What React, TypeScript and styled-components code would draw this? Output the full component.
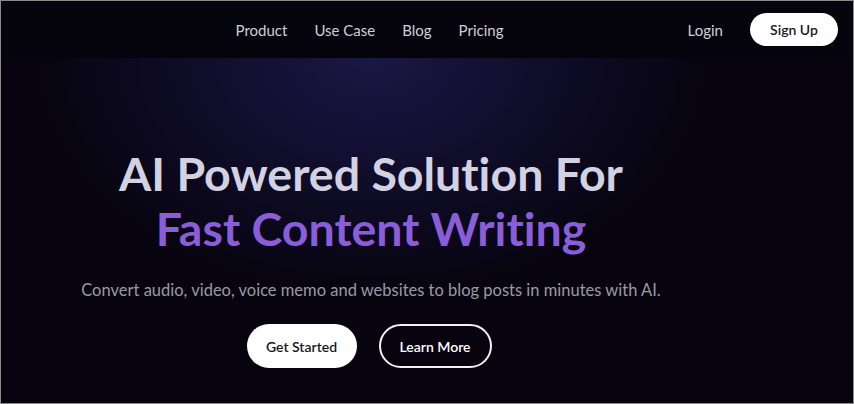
import React from "react";
import styled, { createGlobalStyle } from "styled-components";

const Global = createGlobalStyle`
  html, body { margin: 0; padding: 0; background: #07040f; }
  * { box-sizing: border-box; }
  body { font-family: Lato, "Open Sans", sans-serif; font-variant-ligatures: none; }
`;

const Frame = styled.div`
  width: 854px;
  height: 404px;
  border: 1px solid #8a8a8a;
  background: #07040f;
  display: flex;
  flex-direction: column;
  overflow: hidden;
`;

const Nav = styled.nav`
  height: 57px;
  flex: none;
  background: #05030c;
  display: grid;
  grid-template-columns: 1fr auto 1fr;
  align-items: center;
  padding: 0 15px 0 0;
`;

const NavLinks = styled.div`
  grid-column: 2;
  display: flex;
  gap: 27px;
  margin-left: -100px;
`;

const NavLink = styled.a`
  font-size: 15px;
  color: #cfcfd4;
  text-decoration: none;
`;

const NavRight = styled.div`
  grid-column: 3;
  justify-self: end;
  display: flex;
  align-items: center;
  gap: 27px;
`;

const PillButton = styled.button<{ $variant?: "solid" | "outline"; $w: number; $h: number }>`
  width: ${(p) => p.$w}px;
  height: ${(p) => p.$h}px;
  border-radius: 999px;
  font-family: Lato, sans-serif;
  font-variant-ligatures: none;
  font-size: 14px;
  font-weight: 600;
  cursor: pointer;
  background: ${(p) => (p.$variant === "outline" ? "transparent" : "#ffffff")};
  color: ${(p) => (p.$variant === "outline" ? "#ffffff" : "#17151f")};
  border: ${(p) => (p.$variant === "outline" ? "2px solid #f2f2f2" : "none")};
  padding: 0;
`;

const Hero = styled.section`
  flex: 1;
  background:
    radial-gradient(ellipse 340px 240px at 370px 0px, #1a1845 0%, #141136 30%, #0d0a22 65%, rgba(7,4,15,0) 100%),
    #07040f;
  display: flex;
  flex-direction: column;
  align-items: center;
  padding: 88px 112px 0 0;
`;

const Title = styled.h1`
  margin: 0;
  font-size: 46.5px;
  font-weight: 700;
  line-height: 55px;
  text-align: center;
`;

const TitleLine = styled.span<{ $accent?: boolean }>`
  display: block;
  color: ${(p) => (p.$accent ? "#8b5ed9" : "#d3d2e2")};
`;

const Subtitle = styled.p`
  margin: 24px 0 0;
  font-size: 16.5px;
  color: #9a9aa4;
  text-align: center;
`;

const Actions = styled.div`
  display: flex;
  gap: 22px;
  margin-top: 24px;
  margin-right: 4px;
`;

export default function App() {
  return (
    <>
      <Global />
      <Frame>
        <Nav>
          <NavLinks>
            <NavLink>Product</NavLink>
            <NavLink>Use Case</NavLink>
            <NavLink>Blog</NavLink>
            <NavLink>Pricing</NavLink>
          </NavLinks>
          <NavRight>
            <NavLink>Login</NavLink>
            <PillButton $w={88} $h={33}>Sign Up</PillButton>
          </NavRight>
        </Nav>
        <Hero>
          <Title>
            <TitleLine>AI Powered Solution For</TitleLine>
            <TitleLine $accent>Fast Content Writing</TitleLine>
          </Title>
          <Subtitle>Convert audio, video, voice memo and websites to blog posts in minutes with AI.</Subtitle>
          <Actions>
            <PillButton $w={110} $h={44}>Get Started</PillButton>
            <PillButton $variant="outline" $w={113} $h={44}>Learn More</PillButton>
          </Actions>
        </Hero>
      </Frame>
    </>
  );
}
